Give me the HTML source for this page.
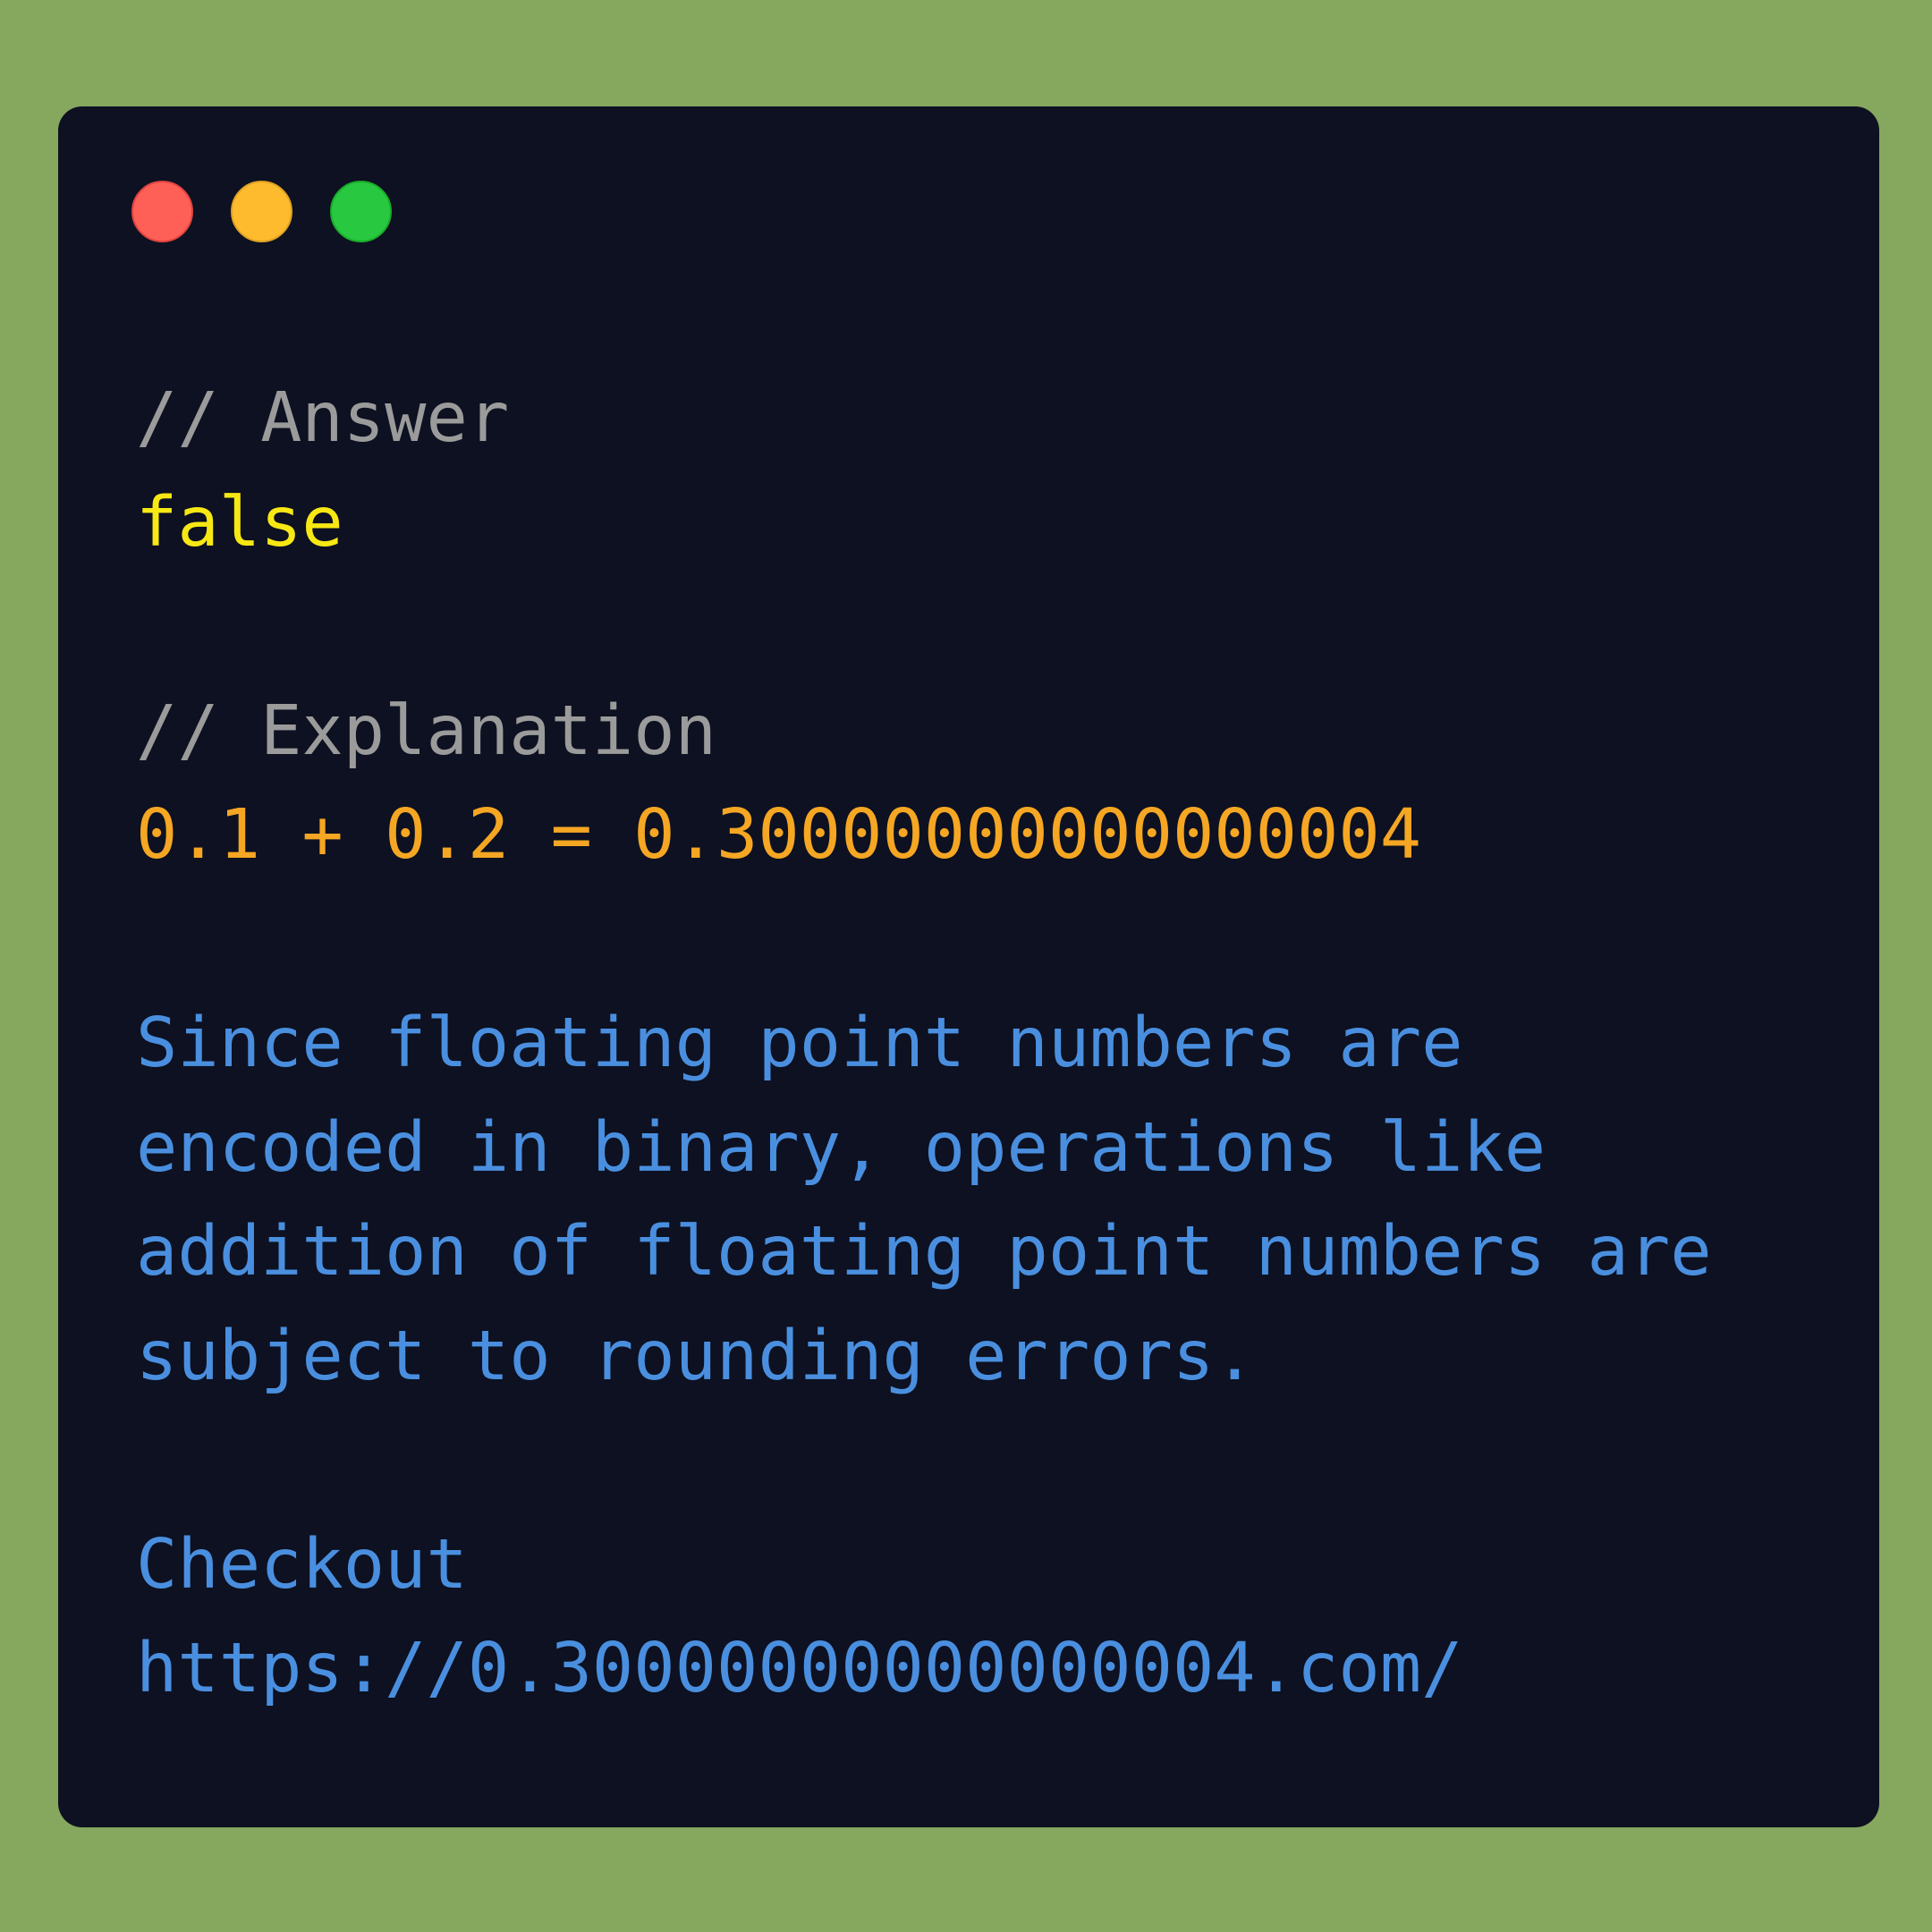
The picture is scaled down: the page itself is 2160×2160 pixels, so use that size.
<!DOCTYPE html>
<html><head><meta charset="utf-8"><style>
html,body{margin:0;padding:0;}
body{width:2160px;height:2160px;background:#86a75e;position:relative;overflow:hidden;}
.card{position:absolute;left:65px;top:119px;width:2036px;height:1924px;background:#0d1121;border-radius:27px;}
.dot{position:absolute;top:202px;width:69px;height:69px;border-radius:50%;box-sizing:border-box;}
pre{position:absolute;left:152px;top:410px;margin:0;font-family:"DejaVu Sans Mono",monospace;font-size:77px;line-height:116.5px;color:#4a8fdf;}
.c{color:#9b9b9b}.y{color:#f7e814}.o{color:#f5a623}
</style></head><body>
<div class="card"></div>
<div class="dot" style="left:147px;background:#fe5f57;border:2px solid #e0443e"></div>
<div class="dot" style="left:258px;background:#febb2e;border:2px solid #dea123"></div>
<div class="dot" style="left:369px;background:#28c840;border:2px solid #1aab29"></div>
<pre><span class="c">// Answer</span>
<span class="y">false</span>

<span class="c">// Explanation</span>
<span class="o">0.1 + 0.2 = 0.30000000000000004</span>

Since floating point numbers are
encoded in binary, operations like
addition of floating point numbers are
subject to rounding errors.

Checkout
https://0.30000000000000004.com/</pre>
</body></html>
